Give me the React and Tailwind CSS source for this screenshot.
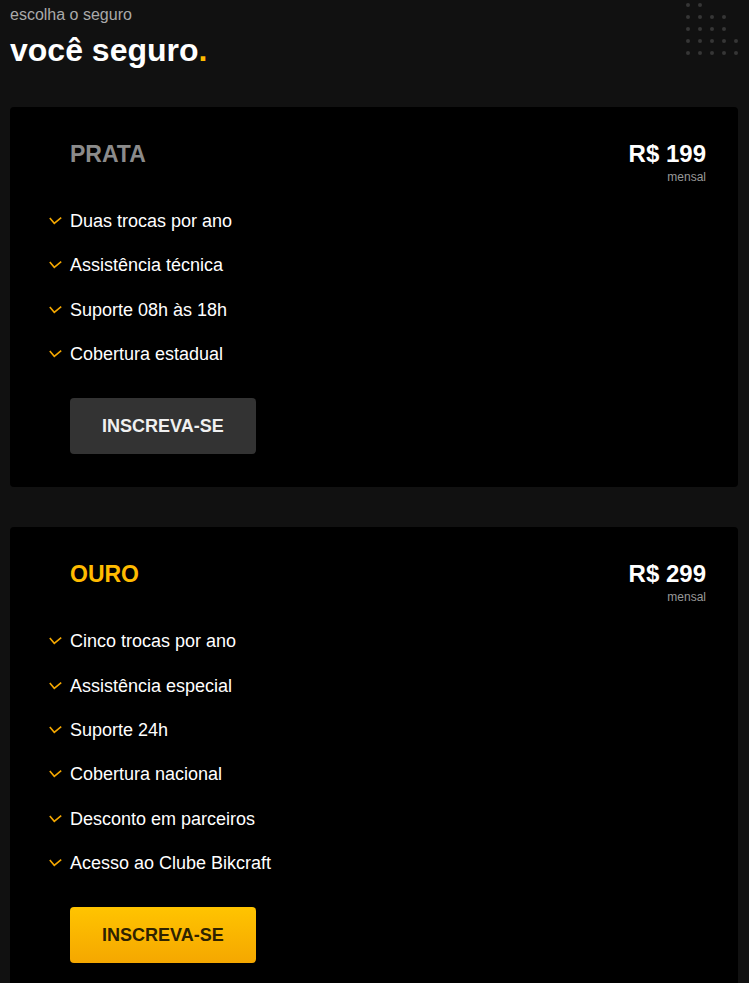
const planos = [
  {
    nome: 'PRATA',
    preco: 'R$ 199',
    itens: ['Duas trocas por ano', 'Assistência técnica', 'Suporte 08h às 18h', 'Cobertura estadual'],
    ouro: false,
  },
  {
    nome: 'OURO',
    preco: 'R$ 299',
    itens: [
      'Cinco trocas por ano',
      'Assistência especial',
      'Suporte 24h',
      'Cobertura nacional',
      'Desconto em parceiros',
      'Acesso ao Clube Bikcraft',
    ],
    ouro: true,
  },
]

const Check = () => (
  <svg width="13" height="8" viewBox="0 0 13 8" fill="none" className="-ml-[21px] mr-[8px] shrink-0">
    <path d="M0.8 1 L5.3 6.3 L12.2 0.6" stroke="#f5a800" strokeWidth="1.6" />
  </svg>
)

const Dots = () => {
  const rows = [2, 4, 4, 5, 5]
  return (
    <div className="absolute top-[3px] left-[686px] flex flex-col gap-[8px]">
      {rows.map((n, r) => (
        <div key={r} className="flex gap-[8px]">
          {Array.from({ length: n }).map((_, c) => (
            <span key={c} className="block w-[4px] h-[4px] rounded-full bg-[#363636]" />
          ))}
        </div>
      ))}
    </div>
  )
}

const Plano = ({ plano }) => (
  <div className="bg-black rounded-[4px] pl-[60px] pr-[32px] pt-[33px] pb-[33px]">
    <div className="flex justify-between items-start">
      <h2
        className={`text-[23px] leading-[28px] font-bold ${plano.ouro ? 'text-[#ffbb00]' : 'text-[#8b8b8b]'}`}
      >
        {plano.nome}
      </h2>
      <div className="text-right">
        <p className="text-[24px] leading-[28px] font-bold text-white">{plano.preco}</p>
        <p className="text-[12px] leading-[14px] mt-[2px] text-[#999]">mensal</p>
      </div>
    </div>

    <ul className="mt-[25px] flex flex-col gap-[20.4px]">
      {plano.itens.map((item) => (
        <li key={item} className="flex items-center text-[18px] leading-[24px] text-white">
          <Check />
          {item}
        </li>
      ))}
    </ul>

    <button
      className={`mt-[32px] h-[56px] px-[32px] rounded-[4px] text-[18px] font-bold ${
        plano.ouro
          ? 'bg-gradient-to-b from-[#ffc400] to-[#f5a700] text-[#2e2200]'
          : 'bg-[#333] text-[#f0f0f0]'
      }`}
    >
      INSCREVA-SE
    </button>
  </div>
)

export default function App() {
  return (
    <div className="relative min-h-screen bg-[#111] overflow-hidden font-['Liberation_Sans',Arial,sans-serif]">
      <Dots />
      <div className="px-[10px]">
        <p className="pt-[5px] text-[16px] leading-[20px] text-[#aaa]">escolha o seguro</p>
        <h1 className="mt-[6px] text-[32px] leading-[38px] font-bold text-white">
          você seguro<span className="text-[#ffbb00]">.</span>
        </h1>
        <div className="mt-[38px] flex flex-col gap-[40px] pr-[1px]">
          {planos.map((p) => (
            <Plano key={p.nome} plano={p} />
          ))}
        </div>
      </div>
    </div>
  )
}
